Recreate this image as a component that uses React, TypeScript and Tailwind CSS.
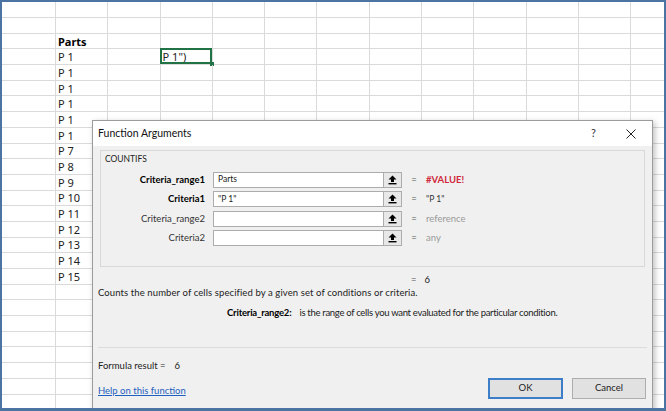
import React from "react";

const cellB: Record<number, string> = {
  2: "Parts",
  3: "P 1",
  4: "P 1",
  5: "P 1",
  6: "P 1",
  7: "P 1",
  8: "P 1",
  9: "P 7",
  10: "P 8",
  11: "P 9",
  12: "P 10",
  13: "P 11",
  14: "P 12",
  15: "P 13",
  16: "P 14",
  17: "P 15",
};

const rows = Array.from({ length: 26 }, (_, i) => i);
const cols = Array.from({ length: 12 }, (_, i) => i);

function UpArrow() {
  return (
    <svg width="9" height="10" viewBox="0 0 9 10">
      <path d="M4.5 0.5 L8.5 4.5 L6 4.5 L6 7 L3 7 L3 4.5 L0.5 4.5 Z" fill="#000" />
      <rect x="0.5" y="8" width="8" height="1.4" fill="#000" />
    </svg>
  );
}

function ArgRow({
  label,
  bold,
  value,
  result,
  resultClass,
}: {
  label: string;
  bold?: boolean;
  value: string;
  result: string;
  resultClass: string;
}) {
  return (
    <div className="flex h-4 items-center">
      <div
        className={
          "w-[108px] pr-2 text-right " +
          (bold ? "font-bold text-black" : "text-[#333]")
        }
      >
        {label}
      </div>
      <div className="flex h-4 w-[171px] items-center border border-[#acacac] bg-white pl-1 text-[8.5px] text-[#222]">
        {value}
      </div>
      <div className="flex h-4 w-[18px] items-center justify-center border border-[#acacac] border-l-0 bg-[#e8e8e8]">
        <UpArrow />
      </div>
      <div className="w-[24px] text-center text-[#555]">=</div>
      <div className={resultClass}>{result}</div>
    </div>
  );
}

export default function App() {
  return (
    <div className="relative h-[411px] w-[666px] overflow-hidden border-2 border-b-[3px] border-[#4b74a3] bg-white font-['Noto_Sans',sans-serif]">
      {/* sheet */}
      <div className="flex flex-col">
        {rows.map((r) => (
          <div
            key={r}
            className={
              "flex border-b border-[#dadada] " + (r === 0 ? "h-[16px]" : "h-[15.7px]")
            }
          >
            <div className="h-full w-[54px] shrink-0 border-r border-[#dadada]" />
            {cols.map((c) => (
              <div
                key={c}
                className="relative flex h-full w-[52.3px] shrink-0 items-center border-r border-[#dadada] pl-[2px] text-[11px] leading-none text-[#222]"
              >
                {c === 0 && cellB[r] ? (
                  <span className={r === 2 ? "font-bold text-black" : ""}>{cellB[r]}</span>
                ) : null}
                {c === 2 && r === 3 ? (
                  <>
                    <span>P 1")</span>
                    <div className="absolute -top-px -left-px -right-0 -bottom-0 border-2 border-[#217346]" />
                    <div className="absolute -right-[2px] -bottom-[2px] h-[4px] w-[4px] bg-[#217346]" />
                  </>
                ) : null}
              </div>
            ))}
          </div>
        ))}
      </div>

      {/* dialog */}
      <div className="absolute left-[90px] top-[118px] flex h-[300px] w-[561px] flex-col border border-[#9c9c9c] bg-[#f0f0f0] font-['Lato',sans-serif] text-[9.5px] text-[#222] shadow-[2px_2px_6px_rgba(0,0,0,0.25)]">
        <div className="flex h-[25px] items-center bg-white pl-[5px]">
          <span className="text-[10.5px] text-[#111]">Function Arguments</span>
          <span className="ml-auto mr-[30px] text-[11px] text-[#333]">?</span>
          <svg width="10" height="10" viewBox="0 0 10 10" className="mr-[16px]">
            <path d="M0.5 0.5 L9.5 9.5 M9.5 0.5 L0.5 9.5" stroke="#222" strokeWidth="1" />
          </svg>
        </div>

        <div className="mx-[7px] mt-[4px] h-[117px] border border-[#d8d8d8] px-[4px] pt-[2px]">
          <div className="text-[8.5px] text-[#222]">COUNTIFS</div>
          <div className="mt-[6px] flex flex-col gap-[3.5px]">
            <ArgRow
              label="Criteria_range1"
              bold
              value="Parts"
              result="#VALUE!"
              resultClass="font-bold text-[#d0283c]"
            />
            <ArgRow
              label="Criteria1"
              bold
              value={'"P 1"'}
              result={'"P 1"'}
              resultClass="text-[8.5px] text-[#333]"
            />
            <ArgRow
              label="Criteria_range2"
              value=""
              result="reference"
              resultClass="text-[#9a9a9a]"
            />
            <ArgRow label="Criteria2" value="" result="any" resultClass="text-[#9a9a9a]" />
          </div>
        </div>

        <div className="mt-[6px] flex h-[14px] items-center pl-[318px]">
          <span className="text-[#555]">=</span>
          <span className="ml-[8px]">6</span>
        </div>
        <div className="flex h-[12px] items-center pl-[5px] tracking-[0.1px]">
          Counts the number of cells specified by a given set of conditions or criteria.
        </div>
        <div className="mt-[8px] flex h-[12px] items-center pl-[134px]">
          <span className="font-bold text-black tracking-[-0.2px]">Criteria_range2:</span>
          <span className="ml-[8px] tracking-[-0.3px]">
            is the range of cells you want evaluated for the particular condition.
          </span>
        </div>

        <div className="mx-[5px] mt-[28px] border-t border-[#dcdcdc]" />

        <div className="mt-[12px] flex h-[12px] items-center pl-[5px]">
          <span>Formula result =</span>
          <span className="ml-[9px]">6</span>
        </div>

        <div className="mt-[6px] flex items-start">
          <span className="mt-[6px] pl-[5px] text-[#1f5fbf] underline">Help on this function</span>
          <div className="ml-auto mr-[6px] flex gap-[9px]">
            <div className="flex h-[21px] w-[75px] items-center justify-center border-2 border-[#3c7fc8] bg-[#e1e1e1]">
              OK
            </div>
            <div className="flex h-[21px] w-[74px] items-center justify-center border border-[#adadad] bg-[#e1e1e1]">
              Cancel
            </div>
          </div>
        </div>
      </div>
    </div>
  );
}
